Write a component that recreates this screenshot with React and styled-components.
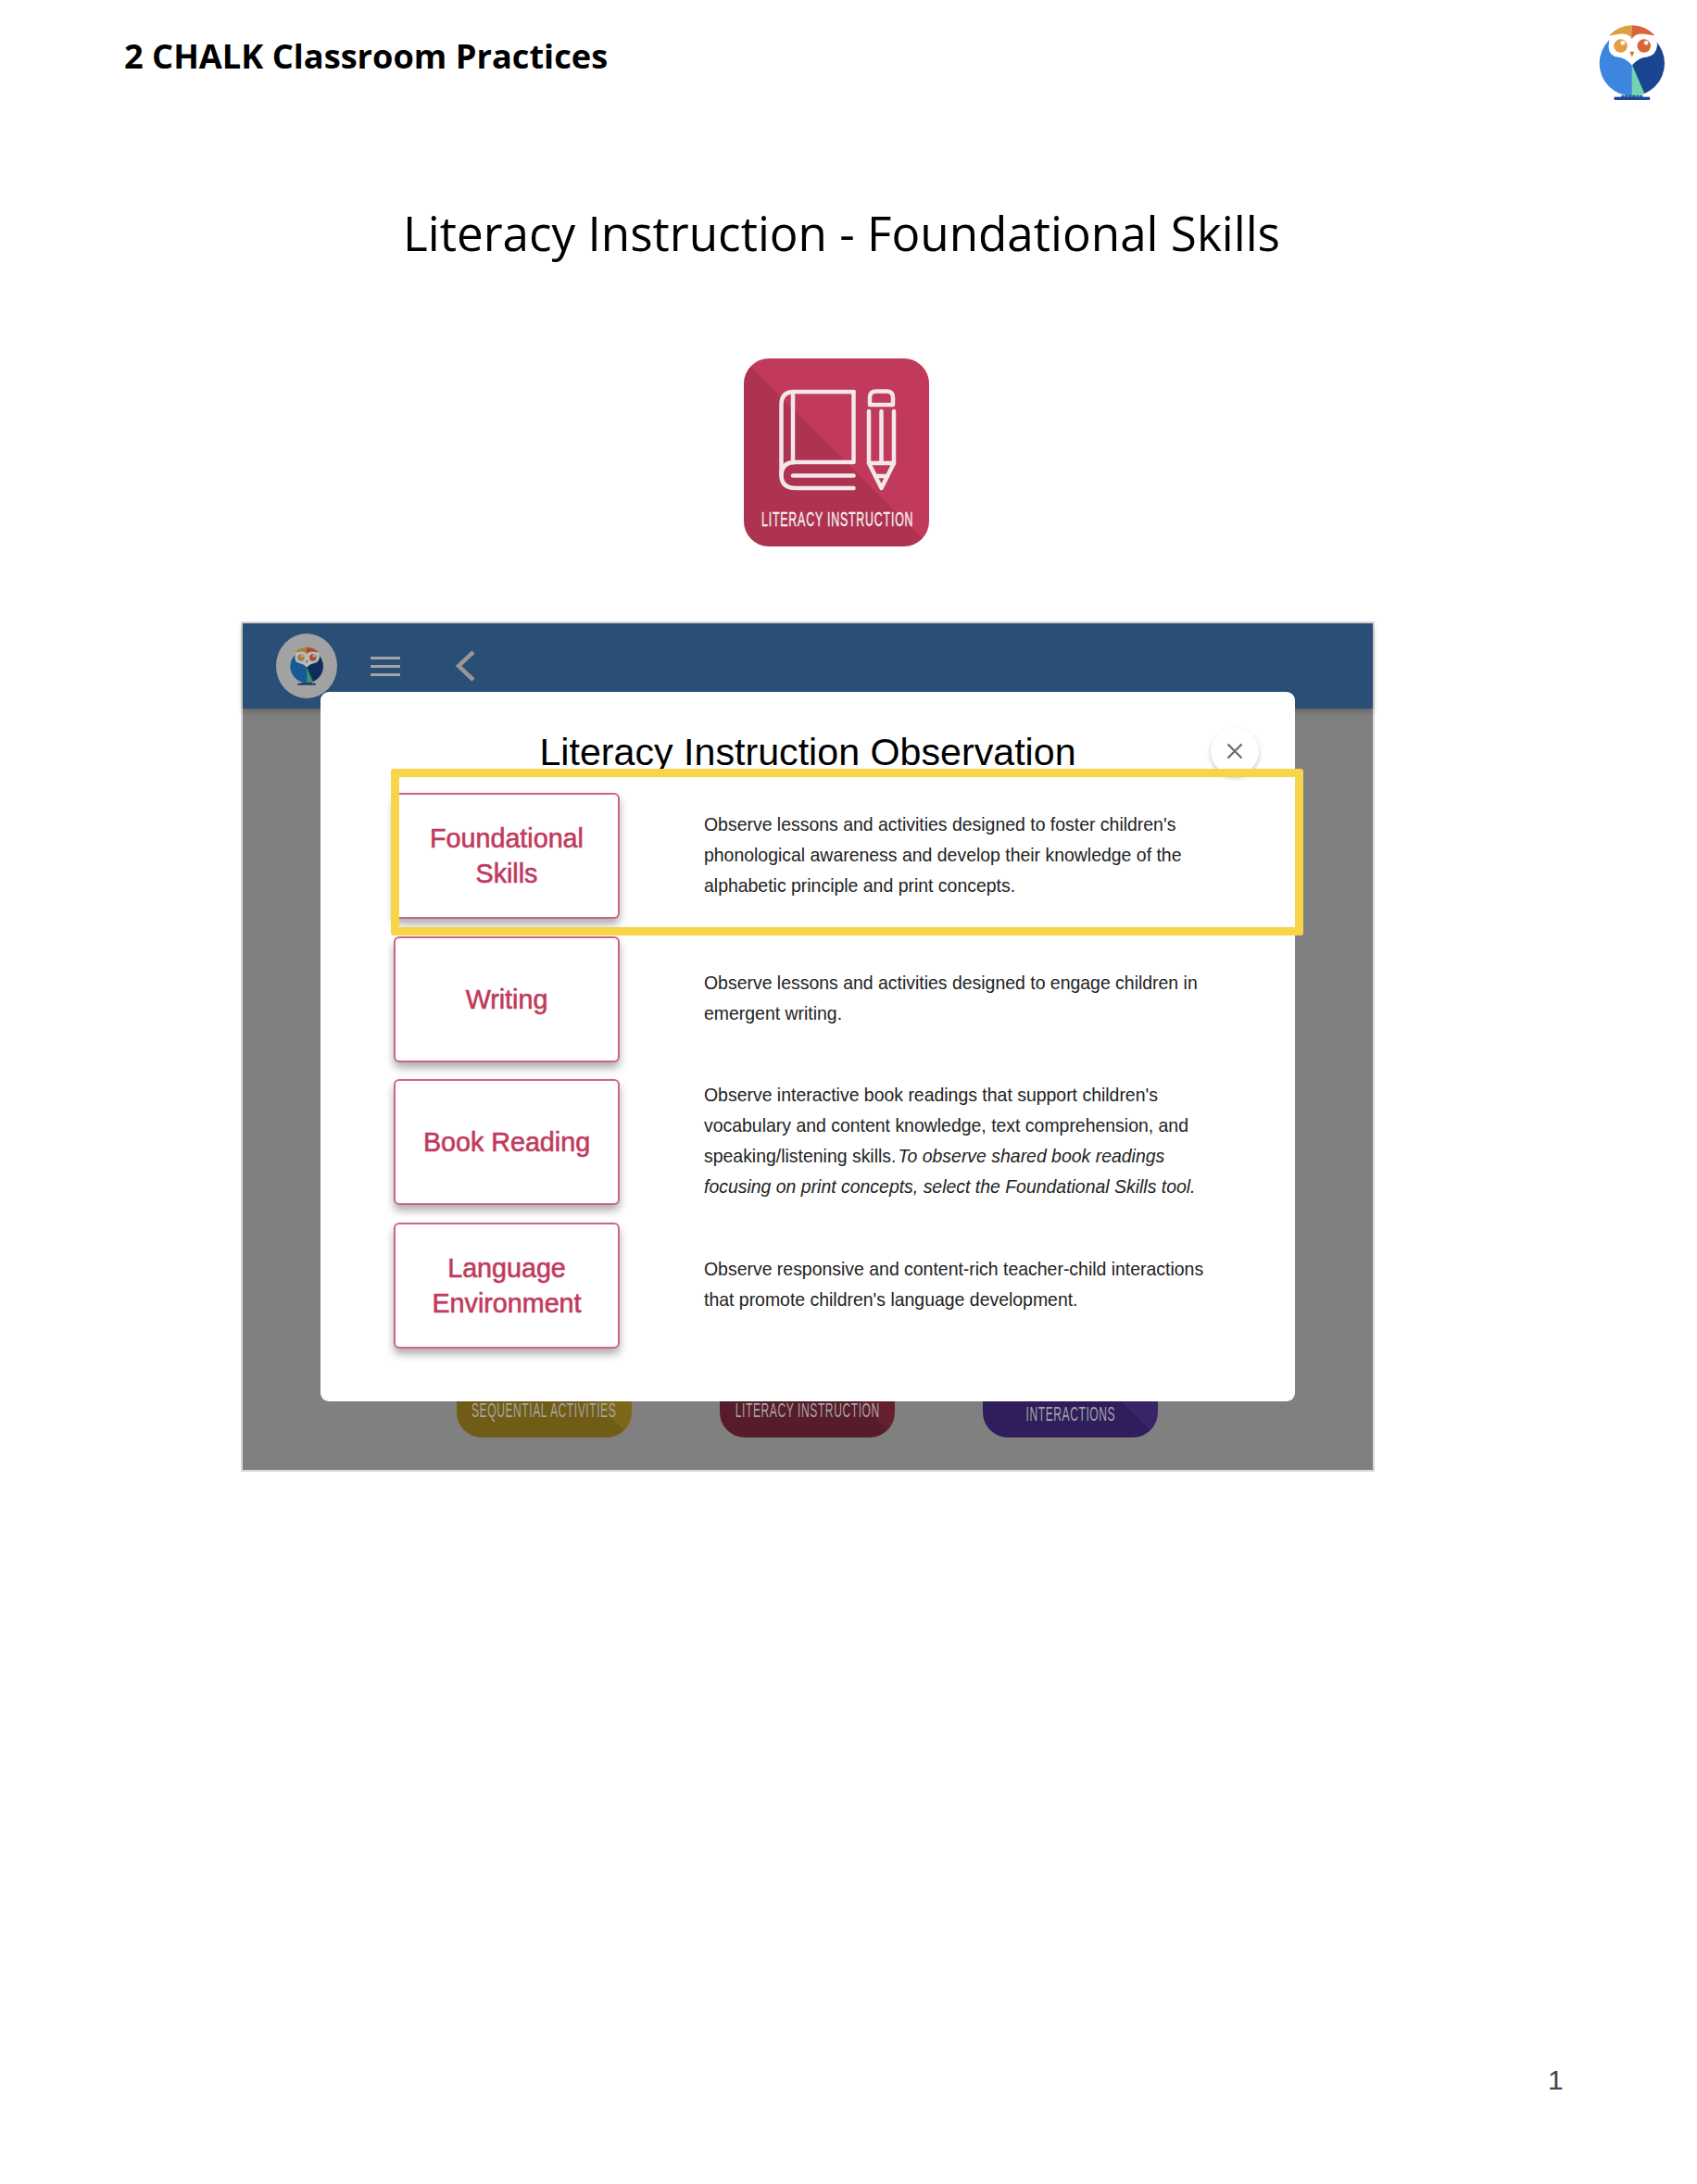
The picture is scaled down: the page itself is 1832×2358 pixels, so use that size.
import React from 'react';
import styled, { createGlobalStyle } from 'styled-components';

const GlobalStyle = createGlobalStyle`
    html, body {
        margin: 0;
        padding: 0;
        background: #fff;
    }
`;

const Note = styled.em`
    margin-left: 2px;
`;

const rows = [
    {
        title: ['Foundational', 'Skills'],
        text: [
            "Observe lessons and activities designed to foster children's",
            'phonological awareness and develop their knowledge of the',
            'alphabetic principle and print concepts.',
        ],
    },
    {
        title: ['Writing'],
        text: [
            'Observe lessons and activities designed to engage children in',
            'emergent writing.',
        ],
    },
    {
        title: ['Book Reading'],
        text: [
            "Observe interactive book readings that support children's",
            'vocabulary and content knowledge, text comprehension, and',
            <>speaking/listening skills.<Note>To observe shared book readings</Note></>,
            <em>focusing on print concepts, select the Foundational Skills tool.</em>,
        ],
    },
    {
        title: ['Language', 'Environment'],
        text: [
            'Observe responsive and content-rich teacher-child interactions',
            "that promote children's language development.",
        ],
    },
];

const tiles = [
    { label: ['SEQUENTIAL ACTIVITIES'], dark: '#715c16', light: '#7e6818' },
    { label: ['LITERACY INSTRUCTION'], dark: '#571c29', light: '#64202f' },
    { label: ['AND COOPERATIVE', 'INTERACTIONS'], dark: '#2f1d5c', light: '#392369' },
];

const Owl = ({ dim, size }) => (
    <svg width={size} viewBox="140 80 220 250">
        <defs>
            <clipPath id={dim ? 'bodyDim' : 'body'}>
                <circle cx="248" cy="208" r="106" />
            </clipPath>
        </defs>
        <g clipPath={`url(#${dim ? 'bodyDim' : 'body'})`}>
            <rect x="140" y="100" width="108" height="220" fill={dim ? '#175a96' : '#3d86e0'} />
            <rect x="248" y="100" width="110" height="220" fill={dim ? '#0d2d5c' : '#1a4590'} />
            <path d="M248 212 L294 318 H248 Z" fill={dim ? '#3d8f70' : '#76d3b0'} />
        </g>
        <path d="M174 116 Q205 85 248 84 V130 H190 Z" fill={dim ? '#a8803a' : '#e0a040'} />
        <path d="M322 116 Q291 85 248 84 V130 H306 Z" fill={dim ? '#a84e2e' : '#dc6238'} />
        <path d="M176 118 L212 112 Q240 112 248 128 Q256 112 284 112 L326 118 L330 150 Q326 184 292 188 Q270 190 248 214 Q226 190 204 188 Q170 184 172 150 Z" fill={dim ? '#b9b9b9' : '#fff'} />
        <circle cx="211" cy="151" r="22" fill={dim ? '#a8803a' : '#e0a040'} />
        <circle cx="287" cy="151" r="22" fill={dim ? '#a84e2e' : '#dc6238'} />
        <circle cx="218" cy="141" r="7" fill={dim ? '#b9b9b9' : '#fff'} />
        <circle cx="294" cy="141" r="7" fill={dim ? '#b9b9b9' : '#fff'} />
        <path d="M240 170 H256 L248 188 Z" fill={dim ? '#a84e2e' : '#dc7a3c'} />
        <rect x="190" y="317" width="116" height="10" fill={dim ? '#0d2d5c' : '#1a4590'} />
        <path d="M212 317 a6 6 0 0 1 12 0 a6 6 0 0 1 12 0 a6 6 0 0 1 12 0 a6 6 0 0 1 12 0 a6 6 0 0 1 12 0 a6 6 0 0 1 12 0 Z" fill={dim ? '#0d2d5c' : '#1a4590'} />
    </svg>
);

const LiteracyIcon = () => (
    <IconTile>
        <svg width="200" height="203" viewBox="0 0 200 203">
            <g fill="none" stroke="#f2e8ea" strokeWidth="4.5" strokeLinecap="round" strokeLinejoin="round">
                <path d="M118.5 36 V112 H56 Q40.5 112 40.5 126 Q40.5 140 56 140 H118.5" />
                <path d="M118.5 36 H54 Q40.5 36 40.5 50 V126" />
                <path d="M53 36 V112" />
                <path d="M53 126.5 H118.5" />
                <path d="M136 50 V42 Q136 35.5 143 35.5 H154 Q161 35.5 161 42 V50 Z" />
                <path d="M135 57 V113 L148.5 140 L162 113 V57" />
                <path d="M148.5 57 V113" />
                <path d="M135 113 H162" />
                <path d="M142 127 H155" />
            </g>
            <IconLabel transform="translate(19 181) scale(0.564 1)">LITERACY INSTRUCTION</IconLabel>
        </svg>
    </IconTile>
);

export default function App() {
    return (
        <Page>
            <GlobalStyle />
            <PageHeader>
                <Brand>2 CHALK Classroom Practices</Brand>
                <Owl size={73} />
            </PageHeader>
            <PageTitle>Literacy Instruction - Foundational Skills</PageTitle>
            <LiteracyIcon />
            <Shot>
                <AppBar>
                    <Avatar>
                        <Owl dim size={37} />
                    </Avatar>
                    <Burger>
                        <span />
                        <span />
                        <span />
                    </Burger>
                    <svg width="24" height="36" viewBox="0 0 24 36">
                        <path d="M21 3 L5 18 L21 33" fill="none" stroke="#979797" strokeWidth="4.5" />
                    </svg>
                </AppBar>
                <ShotBody>
                    {tiles.map((tile) => (
                        <Tile key={tile.label[0]} $dark={tile.dark} $light={tile.light} $lines={tile.label.length}>
                            {tile.label.map((line) => (
                                <TileLine key={line}>{line}</TileLine>
                            ))}
                        </Tile>
                    ))}
                </ShotBody>
                <Modal>
                    <ModalHead>
                        <ModalTitle>Literacy Instruction Observation</ModalTitle>
                        <CloseBtn>
                            <svg width="18" height="18" viewBox="0 0 18 18">
                                <path d="M1.5 1.5 L16.5 16.5 M16.5 1.5 L1.5 16.5" stroke="#6f6f6f" strokeWidth="2.4" />
                            </svg>
                        </CloseBtn>
                    </ModalHead>
                    <Rows>
                        {rows.map((row) => (
                            <Row key={row.title[0]}>
                                <Card>
                                    {row.title.map((line) => (
                                        <span key={line}>{line}</span>
                                    ))}
                                </Card>
                                <Description>
                                    {row.text.map((line, i) => (
                                        <span key={i}>{line}</span>
                                    ))}
                                </Description>
                            </Row>
                        ))}
                    </Rows>
                </Modal>
                <Highlight />
            </Shot>
            <PageNumber>1</PageNumber>
        </Page>
    );
}

const Page = styled.div`
    width: 1832px;
    height: 2358px;
    display: flex;
    flex-direction: column;
    background: #fff;
    overflow: hidden;
    font-family: "Liberation Sans", Arial, sans-serif;
`;

const PageHeader = styled.div`
    height: 109px;
    padding: 0 33px 0 134px;
    display: flex;
    align-items: flex-end;
    justify-content: space-between;
`;

const Brand = styled.div`
    font-family: "Open Sans", sans-serif;
    font-weight: 700;
    font-size: 36.2px;
    line-height: 52px;
    color: #000;
    align-self: flex-start;
    margin-top: 34px;
`;

const PageTitle = styled.h1`
    margin: 108px 15px 0 0;
    font-family: "Open Sans", sans-serif;
    font-weight: 400;
    font-size: 51.2px;
    line-height: 68px;
    color: #000;
    text-align: center;
`;

const IconTile = styled.div`
    width: 200px;
    height: 203px;
    margin: 102px 0 0 803px;
    border-radius: 27px;
    overflow: hidden;
    background: linear-gradient(45deg, #ae3350 50%, #c13a5c 50%);
    svg {
        display: block;
    }
`;

const IconLabel = styled.text`
    font-family: "Liberation Sans", sans-serif;
    font-size: 22px;
    letter-spacing: 1.4px;
    fill: #f6ecee;
    stroke: #f6ecee;
    stroke-width: 0.4px;
`;

const Shot = styled.div`
    position: relative;
    width: 1224px;
    height: 918px;
    margin: 81px 0 0 260px;
    box-sizing: border-box;
    border: 2px solid #d9d9d9;
    background: #808080;
    display: flex;
    flex-direction: column;
`;

const AppBar = styled.div`
    height: 92px;
    flex: none;
    display: flex;
    align-items: center;
    padding-left: 36px;
    background: #2a4f76;
    box-shadow: 0 3px 6px rgba(0, 0, 0, 0.25);
    position: relative;
`;

const Avatar = styled.div`
    width: 66px;
    height: 70px;
    border-radius: 50%;
    background: #a2a2a2;
    display: flex;
    align-items: center;
    justify-content: center;
`;

const Burger = styled.div`
    width: 32px;
    margin: 0 58px 0 36px;
    display: flex;
    flex-direction: column;
    gap: 6px;
    span {
        height: 3px;
        background: #a3a3a3;
    }
`;

const ShotBody = styled.div`
    flex: 1;
    display: flex;
    align-items: flex-end;
    justify-content: center;
    gap: 95px;
    padding: 0 1px 35px 0;
`;

const Tile = styled.div`
    width: 189px;
    height: 188px;
    border-radius: 0 0 27px 27px;
    display: flex;
    flex-direction: column;
    align-items: center;
    justify-content: flex-end;
    padding-bottom: ${(p) => (p.$lines > 1 ? '13px' : '17px')};
    box-sizing: border-box;
    background: linear-gradient(45deg, ${(p) => p.$dark} 50%, ${(p) => p.$light} 50%);
`;

const TileLine = styled.div`
    font-size: 22px;
    line-height: 24px;
    letter-spacing: 1px;
    color: #a5a5a5;
    white-space: nowrap;
    transform: scaleX(0.55);
`;

const Modal = styled.div`
    position: absolute;
    left: 84px;
    top: 74px;
    width: 1052px;
    height: 766px;
    border-radius: 9px;
    background: #fff;
    box-sizing: border-box;
    padding: 0 0 0 79px;
    display: flex;
    flex-direction: column;
`;

const ModalHead = styled.div`
    height: 109px;
    flex: none;
    position: relative;
    display: flex;
    justify-content: center;
    padding-right: 79px;
`;

const ModalTitle = styled.div`
    font-size: 41.2px;
    line-height: 48px;
    margin-top: 41px;
    color: #000;
`;

const CloseBtn = styled.div`
    position: absolute;
    right: 39px;
    top: 38px;
    width: 52px;
    height: 52px;
    border-radius: 50%;
    background: #fff;
    box-shadow: 0 3px 5px rgba(0, 0, 0, 0.22);
    display: flex;
    align-items: center;
    justify-content: center;
`;

const Rows = styled.div`
    display: flex;
    flex-direction: column;
    gap: 18.7px;
`;

const Row = styled.div`
    display: flex;
    align-items: center;
`;

const Card = styled.div`
    width: 244px;
    height: 136px;
    flex: none;
    box-sizing: border-box;
    border: 2px solid #cb6681;
    border-radius: 6px;
    background: #fff;
    box-shadow: 0 6px 10px rgba(0, 0, 0, 0.32);
    display: flex;
    flex-direction: column;
    align-items: center;
    justify-content: center;
    font-size: 28.7px;
    line-height: 38px;
    color: #c13a5c;
    -webkit-text-stroke: 0.6px #c13a5c;
`;

const Description = styled.div`
    margin-left: 91px;
    padding-bottom: 2px;
    display: flex;
    flex-direction: column;
    font-size: 19.45px;
    line-height: 33px;
    color: #222;
    span {
        white-space: nowrap;
    }
`;

const Highlight = styled.div`
    position: absolute;
    left: 160px;
    top: 157px;
    width: 985px;
    height: 180px;
    box-sizing: border-box;
    border: 9px solid #f8d448;
    border-radius: 3px;
`;

const PageNumber = styled.div`
    margin: 639px 0 0 1671px;
    font-size: 30px;
    line-height: 36px;
    color: #444;
`;
